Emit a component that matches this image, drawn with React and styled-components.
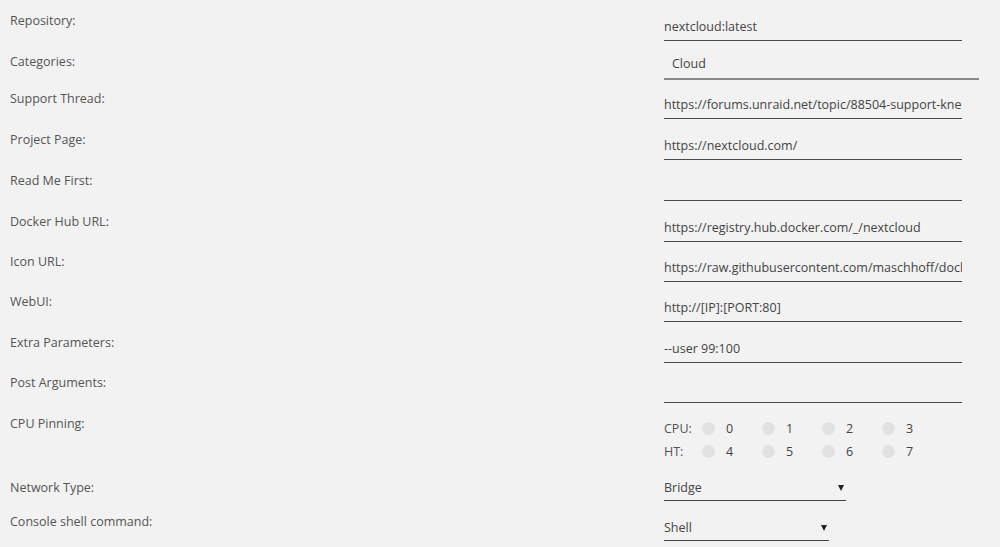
import React from "react";
import styled, { createGlobalStyle } from "styled-components";

const GlobalStyle = createGlobalStyle`
  html, body {
    margin: 0;
    padding: 0;
    background: #f2f2f2;
  }
  body {
    font-family: "Open Sans", "Noto Sans", sans-serif;
    font-size: 12.5px;
    color: #555;
  }
`;

const Form = styled.div`
  display: flex;
  flex-direction: column;
  padding-top: 7px;
  width: 1000px;
  height: 547px;
  overflow: hidden;
`;

const Row = styled.div`
  display: flex;
  height: ${(p) => p.$h}px;
  flex: 0 0 auto;
`;

const Label = styled.div`
  width: 654px;
  padding-left: 10px;
  padding-top: 6px;
  line-height: 16px;
  color: #555;
`;

const Value = styled.div`
  flex: 1;
  display: flex;
  flex-direction: column;
`;

const TextInput = styled.input`
  box-sizing: border-box;
  width: 298px;
  height: 28px;
  margin-top: 6px;
  padding: 0;
  border: none;
  border-bottom: 1px solid #4a4a4a;
  background: transparent;
  font-family: inherit;
  font-size: 12.5px;
  color: #444;
  outline: none;
`;

const Category = styled.div`
  box-sizing: border-box;
  width: 315px;
  height: 28px;
  margin-top: 4px;
  padding-left: 8px;
  line-height: 24px;
  border-bottom: 2px solid #888;
  color: #444;
`;

const Pins = styled.div`
  display: flex;
  flex-direction: column;
  gap: 6px;
  padding-top: 10px;
`;

const PinLine = styled.div`
  display: flex;
  align-items: center;
  height: 17px;
`;

const PinLabel = styled.span`
  width: 38px;
  color: #555;
`;

const Pin = styled.label`
  display: flex;
  align-items: center;
  width: 60px;
  color: #444;
`;

const Dot = styled.span`
  width: 13px;
  height: 13px;
  border-radius: 50%;
  background: #e2e2e2;
  margin-right: 11px;
`;

const Select = styled.div`
  box-sizing: border-box;
  display: flex;
  align-items: center;
  justify-content: space-between;
  width: ${(p) => p.$w}px;
  height: ${(p) => p.$h}px;
  margin-top: ${(p) => p.$top}px;
  padding-right: ${(p) => p.$pr}px;
  border-bottom: 1px solid #444;
  color: #444;
`;

const Arrow = styled.span`
  width: 0;
  height: 0;
  border-left: 3px solid transparent;
  border-right: 3px solid transparent;
  border-top: 6px solid #222;
`;

const fields = [
  { label: "Repository:", value: "nextcloud:latest", h: 41 },
  { label: "Categories:", category: "Cloud", h: 37 },
  {
    label: "Support Thread:",
    value: "https://forums.unraid.net/topic/88504-support-knex666-nextcloud/",
    h: 41,
  },
  { label: "Project Page:", value: "https://nextcloud.com/", h: 41 },
  { label: "Read Me First:", value: "", h: 41 },
  {
    label: "Docker Hub URL:",
    value: "https://registry.hub.docker.com/_/nextcloud",
    h: 40,
  },
  {
    label: "Icon URL:",
    value:
      "https://raw.githubusercontent.com/maschhoff/docker/master/nextcloud/nextcloud-logo.png",
    h: 40,
  },
  { label: "WebUI:", value: "http://[IP]:[PORT:80]", h: 41 },
  { label: "Extra Parameters:", value: "--user 99:100", h: 40 },
  { label: "Post Arguments:", value: "", h: 41 },
];

const PinRow = ({ name, cores }) => (
  <PinLine>
    <PinLabel>{name}</PinLabel>
    {cores.map((c) => (
      <Pin key={c}>
        <Dot />
        {c}
      </Pin>
    ))}
  </PinLine>
);

export default function App() {
  return (
    <>
      <GlobalStyle />
      <Form>
        {fields.map((f) => (
          <Row key={f.label} $h={f.h}>
            <Label>{f.label}</Label>
            <Value>
              {f.category ? (
                <Category>{f.category}</Category>
              ) : (
                <TextInput readOnly defaultValue={f.value} />
              )}
            </Value>
          </Row>
        ))}
        <Row $h={64}>
          <Label>CPU Pinning:</Label>
          <Value>
            <Pins>
              <PinRow name="CPU:" cores={[0, 1, 2, 3]} />
              <PinRow name="HT:" cores={[4, 5, 6, 7]} />
            </Pins>
          </Value>
        </Row>
        <Row $h={34}>
          <Label>Network Type:</Label>
          <Value>
            <Select $w={182} $h={26} $top={1} $pr={2}>
              Bridge
              <Arrow />
            </Select>
          </Value>
        </Row>
        <Row $h={40}>
          <Label>Console shell command:</Label>
          <Value>
            <Select $w={165} $h={26} $top={7} $pr={2}>
              Shell
              <Arrow />
            </Select>
          </Value>
        </Row>
      </Form>
    </>
  );
}
